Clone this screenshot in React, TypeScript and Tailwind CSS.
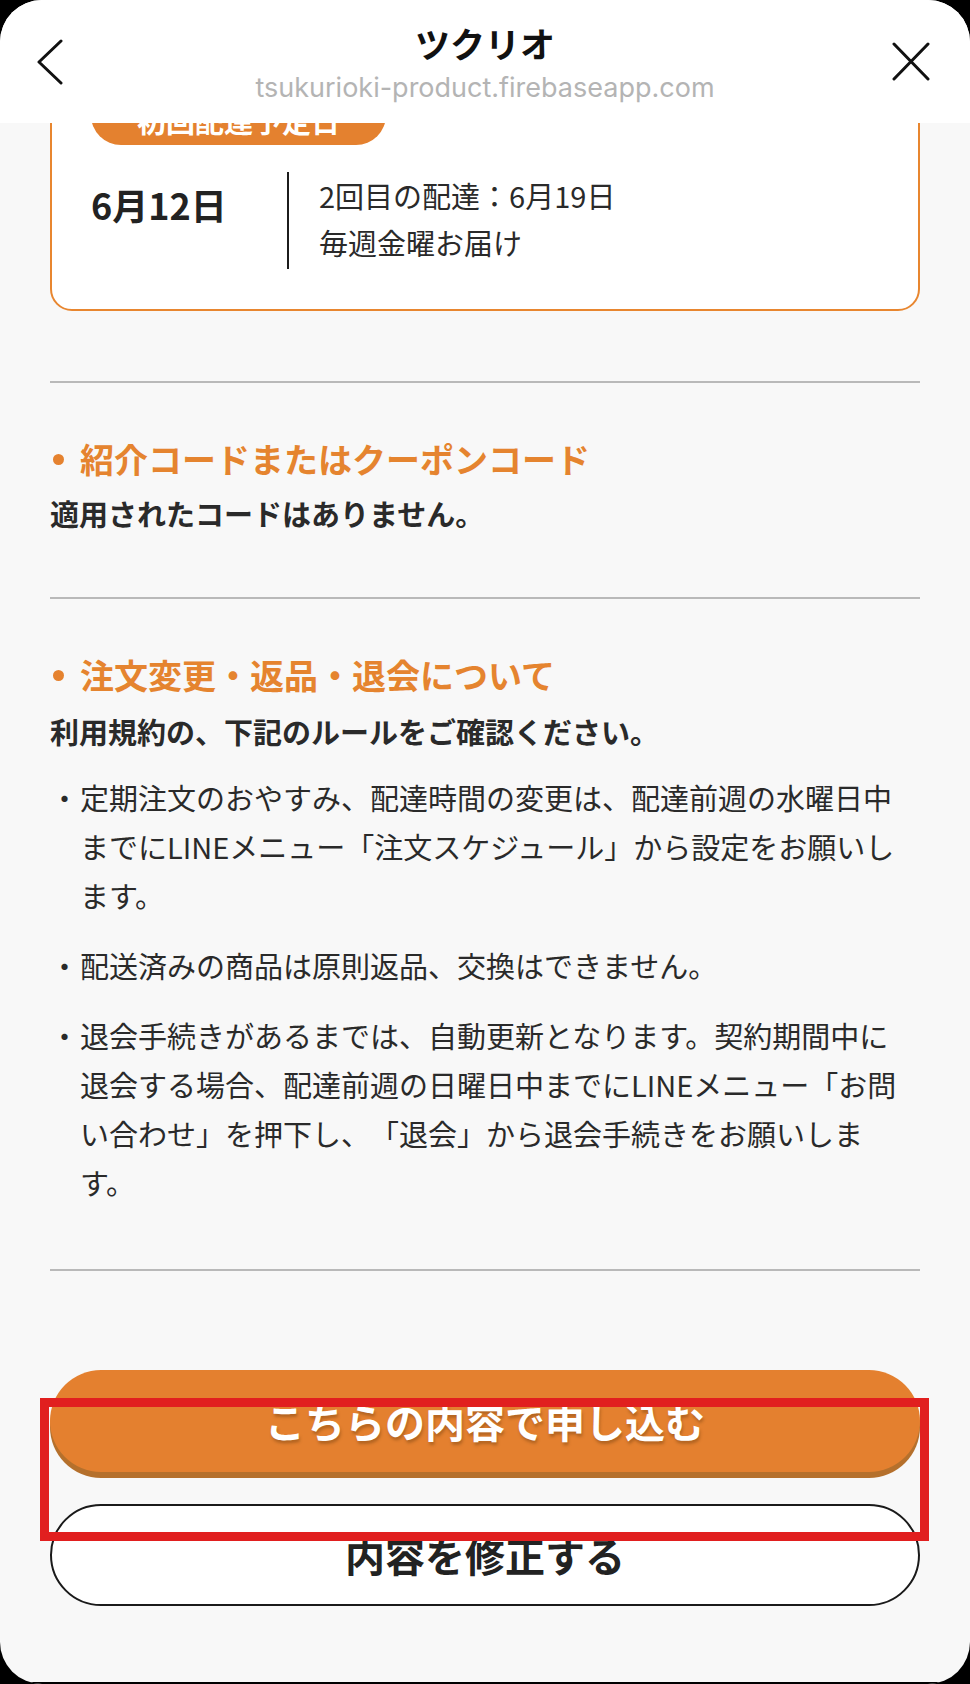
import React from 'react';

const rules = [
  '定期注文のおやすみ、配達時間の変更は、配達前週の水曜日中までにLINEメニュー「注文スケジュール」から設定をお願いします。',
  '配送済みの商品は原則返品、交換はできません。',
  '退会手続きがあるまでは、自動更新となります。契約期間中に退会する場合、配達前週の日曜日中までにLINEメニュー「お問い合わせ」を押下し、「退会」から退会手続きをお願いします。',
];

function SectionHeading({ children }: { children: React.ReactNode }) {
  return (
    <div className="flex items-center">
      <span className="w-[11px] h-[11px] rounded-full bg-[#e5822f] ml-[3px] mr-[16px]"></span>
      <h2 className="text-[34px] leading-[48px] font-bold text-[#e5842f]">{children}</h2>
    </div>
  );
}

export default function App() {
  return (
    <div className="w-[970px] h-[1684px] bg-black font-['Noto_Sans_CJK_JP',sans-serif]">
      <div className="relative h-[1684px] rounded-[42px] bg-[#f8f8f8] overflow-hidden flex flex-col">
        {/* header */}
        <header className="relative z-10 h-[123px] bg-white flex items-center shrink-0">
          <div className="w-[140px] pl-[37px] flex items-center">
            <svg width="26" height="46" viewBox="0 0 26 46" fill="none" stroke="#111" strokeWidth="3" strokeLinecap="round" strokeLinejoin="round">
              <polyline points="24,2 2,23 24,44" />
            </svg>
          </div>
          <div className="flex-1 flex flex-col items-center pt-[2px]">
            <div className="text-[35px] leading-[44px] font-semibold text-[#111]">ツクリオ</div>
            <div className="mt-[6px] text-[27px] leading-[34px] text-[#b4b4b4] font-['Inter',sans-serif]">
              tsukurioki-product.firebaseapp.com
            </div>
          </div>
          <div className="w-[140px] pr-[40px] flex items-center justify-end">
            <svg width="38" height="39" viewBox="0 0 38 39" fill="none" stroke="#111" strokeWidth="3" strokeLinecap="round">
              <line x1="2" y1="2" x2="36" y2="37" />
              <line x1="36" y1="2" x2="2" y2="37" />
            </svg>
          </div>
        </header>

        {/* scrolled content */}
        <main className="flex-1 overflow-hidden px-[50px]">
          <div className="-mt-[38px] border-2 border-[#e8862f] rounded-[22px] bg-white">
            <div className="ml-[39px] w-[295px] h-[58px] rounded-b-[30px] bg-[#e4812f] flex items-end justify-center pb-[5px]">
              <span className="text-[29px] leading-[40px] font-bold text-white">初回配達予定日</span>
            </div>
            <div className="flex items-start mt-[27px] pb-[40px]">
              <div className="w-[235px] pl-[39px] pt-[8px] text-[36px] leading-[48px] font-bold text-[#222]">6月12日</div>
              <div className="w-[2px] h-[97px] bg-[#1c1c1c]"></div>
              <div className="pl-[30px] text-[29px] leading-[47px] text-[#2a2a2a]">
                <p>2回目の配達：6月19日</p>
                <p>毎週金曜お届け</p>
              </div>
            </div>
          </div>

          <div className="mt-[70px] h-[2px] bg-[#b9b9b9]"></div>

          <section className="mt-[52px]">
            <SectionHeading>紹介コードまたはクーポンコード</SectionHeading>
            <p className="mt-[10px] text-[29px] leading-[40px] font-bold text-[#2a2a2a]">適用されたコードはありません。</p>
          </section>

          <div className="mt-[64px] h-[2px] bg-[#b9b9b9]"></div>

          <section className="mt-[52px]">
            <SectionHeading>注文変更・返品・退会について</SectionHeading>
            <p className="mt-[12px] text-[29px] leading-[40px] font-bold text-[#2a2a2a]">利用規約の、下記のルールをご確認ください。</p>
            <ul className="mt-[22px] flex flex-col gap-[21px]">
              {rules.map((r) => (
                <li key={r} className="flex text-[29px] leading-[49px] text-[#2a2a2a] [text-spacing-trim:space-all]">
                  <span className="w-[30px] shrink-0">・</span>
                  <span className="w-[830px]">{r}</span>
                </li>
              ))}
            </ul>
          </section>

          <div className="mt-[62px] h-[2px] bg-[#b9b9b9]"></div>

          <button className="mt-[99px] w-full h-[102px] rounded-full bg-[#e4802f] shadow-[0_6px_0_#b5702c] flex items-center justify-center">
            <span className="text-[40px] font-bold text-white [text-shadow:1px_3px_3px_rgba(90,50,10,0.35)]">こちらの内容で申し込む</span>
          </button>
          <button className="mt-[32px] w-full h-[102px] rounded-full bg-white border-2 border-[#1a1a1a] flex items-center justify-center">
            <span className="text-[40px] font-bold text-[#222]">内容を修正する</span>
          </button>
        </main>

        <div className="h-[2px] mx-[8px] bg-black shrink-0"></div>

        {/* annotation frame */}
        <div className="absolute left-[40px] top-[1398px] w-[889px] h-[143px] border-[9px] border-[#e11f1f]"></div>
      </div>
    </div>
  );
}
